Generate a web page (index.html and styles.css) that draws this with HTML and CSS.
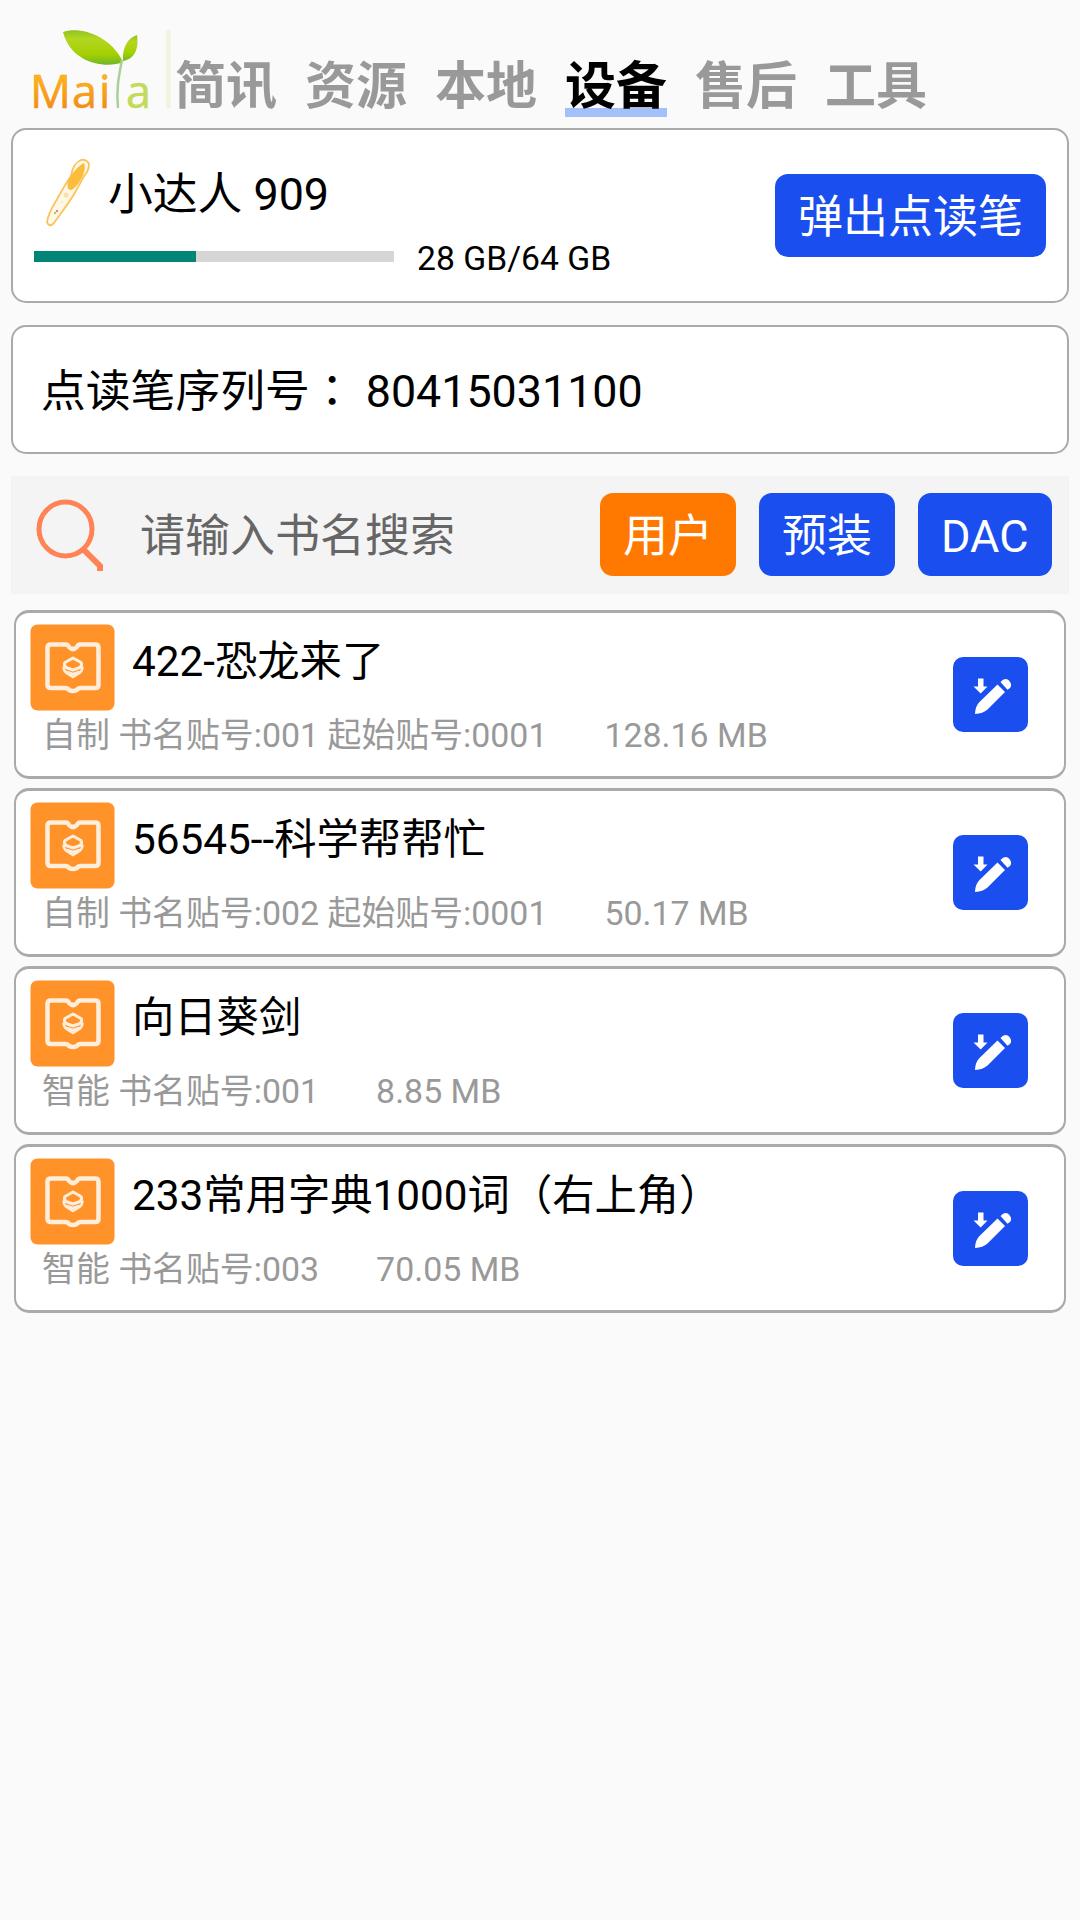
FILE: index.html
```html
<!DOCTYPE html>
<html lang="zh-CN">
<head>
    <meta charset="UTF-8">
    <title>设备</title>
    <link rel="stylesheet" href="styles.css">
</head>
<body>
    <!-- Shared icons -->
    <svg class="icon-defs" width="0" height="0">
        <symbol id="icon-book" viewBox="0 0 86 88">
            <rect x="0.5" y="0.5" width="84" height="86" rx="7" fill="#ff9228"/>
            <path d="M21 20.500 H36 Q38 20.500 39 23 Q43 27 47 23 Q48 20.500 50 20.500 H65 Q68.500 20.500 68.500 23.500 V61 Q68.500 64 65 64 H51 Q48 64 47 66 Q43 68 39 66 Q38 64 35 64 H21 Q17.500 64 17.500 61 V23.500 Q17.500 20.500 21 20.500 Z" fill="none" stroke="#ffeedb" stroke-width="4.500" stroke-linejoin="round"/>
            <path d="M43 34 L51 38.500 Q52.500 41 50 43.500 L43 46 L36 43.500 Q33.500 41 35 38.500 Z" fill="none" stroke="#ffeedb" stroke-width="3" stroke-linejoin="round"/>
            <path d="M33.500 43.500 Q34 48 38 50 L43 53 L48 50 Q52 48 52.500 43.500 M37 48 L43 50 L49 48" fill="none" stroke="#ffeedb" stroke-width="2.400" stroke-linecap="round"/>
        </symbol>
        <symbol id="icon-edit" viewBox="0 0 75 75">
            <path d="M25 21.500 h5.500 v8 h4 L27.700 36.500 L20.500 29.500 h4.500 Z" fill="#fff"/>
            <path d="M44.500 27.500 L52 35 L34.500 52.500 Q30 56.500 22 57 Q22 49.500 26.500 45 Z" fill="#fff"/>
            <path d="M47.500 25 Q51.500 20 55.500 23 Q60 27.500 57 31 L54.500 32.700 Z" fill="#fff"/>
        </symbol>
    </svg>

    <header class="header">
        <svg class="logo" width="142" height="110" viewBox="0 0 142 110">
            <defs>
                <linearGradient id="leaf" x1="0" y1="0" x2="0" y2="1">
                    <stop offset="0" stop-color="#8fc31f"/>
                    <stop offset="0.250" stop-color="#b4d622"/>
                    <stop offset="0.700" stop-color="#a4d000"/>
                    <stop offset="1" stop-color="#6fb62a"/>
                </linearGradient>
                <linearGradient id="orange" x1="0" y1="0" x2="0" y2="1">
                    <stop offset="0.300" stop-color="#fdb515"/>
                    <stop offset="0.800" stop-color="#f08a1c"/>
                </linearGradient>
            </defs>
            <path d="M31 14 C46 8 78 16 91 44 C75 51 39 46 31 14 Z" fill="url(#leaf)"/>
            <path d="M91 43 C90 29 96 20 105 17 C107 30 103 41 91 43 Z" fill="url(#leaf)"/>
            <path d="M90 42 C87 57 84 71 86 90" fill="none" stroke="#a9d09a" stroke-width="2.500"/>
            <text class="logo-text" x="-2" y="90" textLength="41" lengthAdjust="spacingAndGlyphs" fill="url(#orange)" stroke="#f79a1a">M</text>
            <text class="logo-text" x="40" y="90" fill="url(#orange)" stroke="#f79a1a">a</text>
            <text class="logo-text" x="67" y="90" fill="url(#orange)" stroke="#f79a1a">i</text>
            <text class="logo-text" x="94" y="90" fill="#c3da5a" stroke="#c3da5a">a</text>
            <path d="M136.500 12 V90" stroke="#edf5da" stroke-width="4"/>
        </svg>
        <nav class="tabs">
            <span class="tab">简讯</span>
            <span class="tab">资源</span>
            <span class="tab">本地</span>
            <span class="tab active">设备</span>
            <span class="tab">售后</span>
            <span class="tab">工具</span>
        </nav>
    </header>

    <section class="card device-card">
        <div class="device-info">
            <div class="device-name">
                <svg width="74" height="70" viewBox="0 1 74 70">
                    <path d="M47 2 Q53 1 55 6 Q55 13 50 18 L43 31 C36 44 27 55 20 65 Q15 70 13 64 Q14 56 22 43 C27 34 32 25 37 18 Q39 5 47 2 Z" fill="#fff8e8" stroke="#f9c55b" stroke-width="1.800"/>
                    <path d="M50 5 C54 14 42 31 37 32 Q32 32 34 23 C38 15 45 7 50 5 Z" fill="#fbbd3c"/>
                    <circle cx="32" cy="37" r="2.500" fill="#fde0a8"/>
                    <circle cx="28" cy="44" r="1.500" fill="#fdeccb"/>
                    <circle cx="23" cy="53" r="1.200" fill="#f07d94"/>
                    <circle cx="21" cy="55" r="1.200" fill="#86d58a"/>
                </svg>
                <span>小达人 909</span>
            </div>
            <div class="storage">
                <div class="bar"><div class="bar-fill" style="width: 45%"></div></div>
                <span>28 GB/64 GB</span>
            </div>
        </div>
        <button class="btn">弹出点读笔</button>
    </section>

    <section class="card serial-card">
        <span>点读笔序列号<span class="colon" lang="zh-TW">：</span> 80415031100</span>
    </section>

    <section class="search">
        <svg width="70" height="76" viewBox="0 0 70 76">
            <ellipse cx="30.500" cy="33" rx="26.500" ry="27" fill="none" stroke="#ff8354" stroke-width="5"/>
            <path d="M49 54 L65 70 V75" fill="none" stroke="#ff8354" stroke-width="6"/>
        </svg>
        <input class="search-input" type="text" placeholder="请输入书名搜索">
        <button class="btn btn-active">用户</button>
        <button class="btn">预装</button>
        <button class="btn">DAC</button>
    </section>

    <main class="books">
        <article class="book">
            <div class="book-info">
                <div class="book-title">
                    <svg width="86" height="88"><use href="#icon-book"/></svg>
                    <span>422-恐龙来了</span>
                </div>
                <div class="book-meta"><span>自制 书名贴号:001 起始贴号:0001</span><span>128.16 MB</span></div>
            </div>
            <button class="edit"><svg width="75" height="75"><use href="#icon-edit"/></svg></button>
        </article>
        <article class="book">
            <div class="book-info">
                <div class="book-title">
                    <svg width="86" height="88"><use href="#icon-book"/></svg>
                    <span>56545--科学帮帮忙</span>
                </div>
                <div class="book-meta"><span>自制 书名贴号:002 起始贴号:0001</span><span>50.17 MB</span></div>
            </div>
            <button class="edit"><svg width="75" height="75"><use href="#icon-edit"/></svg></button>
        </article>
        <article class="book">
            <div class="book-info">
                <div class="book-title">
                    <svg width="86" height="88"><use href="#icon-book"/></svg>
                    <span>向日葵剑</span>
                </div>
                <div class="book-meta"><span>智能 书名贴号:001</span><span>8.85 MB</span></div>
            </div>
            <button class="edit"><svg width="75" height="75"><use href="#icon-edit"/></svg></button>
        </article>
        <article class="book">
            <div class="book-info">
                <div class="book-title">
                    <svg width="86" height="88"><use href="#icon-book"/></svg>
                    <span>233常用字典1000词（右上角）</span>
                </div>
                <div class="book-meta"><span>智能 书名贴号:003</span><span>70.05 MB</span></div>
            </div>
            <button class="edit"><svg width="75" height="75"><use href="#icon-edit"/></svg></button>
        </article>
    </main>
</body>
</html>
```

FILE: styles.css
```css
* {
    box-sizing: border-box;
}

body {
    margin: 0;
    min-height: 1920px;
    background: #fafafa;
    color: #000;
    font-family: Roboto, "Noto Sans CJK SC", sans-serif;
    font-size: 45px;
}

svg {
    display: block;
    flex-shrink: 0;
}

.icon-defs {
    position: absolute;
}

/* Header */
.header {
    display: flex;
    align-items: flex-start;
    height: 128px;
    padding: 18px 0 0 32px;
}

.logo {
    overflow: visible;
}

.logo-text {
    font-family: "Open Sans", sans-serif;
    font-size: 45px;
    stroke-width: 0.6px;
}

.tabs {
    display: flex;
    gap: 28px;
    margin: 38px 0 0 1px;
}

.tab {
    height: 61px;
    font-size: 51px;
    font-weight: bold;
    line-height: 61px;
    color: #999;
}

.tab.active {
    color: #000;
    background: linear-gradient(#a4c0fa, #a4c0fa) bottom / 100% 9px no-repeat;
}

/* Cards */
.card {
    display: flex;
    align-items: center;
    margin: 0 11px 22px;
    background: #fff;
    border: 2px solid #aaa;
    border-radius: 15px;
}

.device-card {
    height: 175px;
    padding: 0 21px;
    justify-content: space-between;
}

.device-name {
    display: flex;
    align-items: center;
    height: 74px;
    margin-top: 10px;
    font-size: 44.8px;
}

.device-name span {
    padding-bottom: 6px;
}

.storage {
    display: flex;
    align-items: center;
    gap: 23px;
    height: 54px;
    font-size: 33.7px;
}

.storage span {
    padding-top: 2px;
}

.bar {
    width: 360px;
    height: 11px;
    margin-top: -3px;
    background: #d6d6d6;
}

.bar-fill {
    height: 100%;
    background: #008577;
}

.serial-card {
    height: 129px;
    padding: 4px 27px 0 28px;
    font-size: 44.8px;
    line-height: 52px;
}

.colon {
    font-family: "Noto Sans CJK TC", sans-serif;
    line-height: 1;
}

.btn {
    height: 83px;
    padding: 4px 23px 0;
    border: none;
    border-radius: 13px;
    background: #1a4eee;
    color: #fff;
    font: inherit;
    line-height: 79px;
    white-space: nowrap;
}

.btn-active {
    background: #ff7800;
}

/* Search */
.search {
    display: flex;
    align-items: center;
    gap: 23px;
    height: 118px;
    margin: 0 11px 16px;
    padding: 0 17.5px 2px 24px;
    background: #f4f4f4;
}

.search-input {
    flex: 1;
    min-width: 0;
    height: 80px;
    padding: 4px 0 0 12px;
    border: none;
    outline: none;
    background: none;
    font: inherit;
}

.search-input::placeholder {
    color: #666;
}

/* Book list */
.books {
    display: flex;
    flex-direction: column;
    gap: 9px;
    margin: 0 14px;
}

.book {
    display: flex;
    justify-content: space-between;
    height: 169px;
    padding: 11px 36px 0 14px;
    background: #fff;
    border: 2px solid #aaa;
    border-width: 3px 2px;
    border-radius: 15px;
}

.book-title {
    display: flex;
    gap: 16px;
    height: 88px;
    font-size: 42.3px;
    line-height: 76px;
}

.book-meta {
    display: flex;
    gap: 57px;
    padding-left: 12px;
    font-size: 33.9px;
    line-height: 48px;
    color: #999;
}

.edit {
    width: 75px;
    height: 75px;
    margin-top: 33px;
    padding: 0;
    border: none;
    border-radius: 10px;
    background: #1a4eee;
}
```
